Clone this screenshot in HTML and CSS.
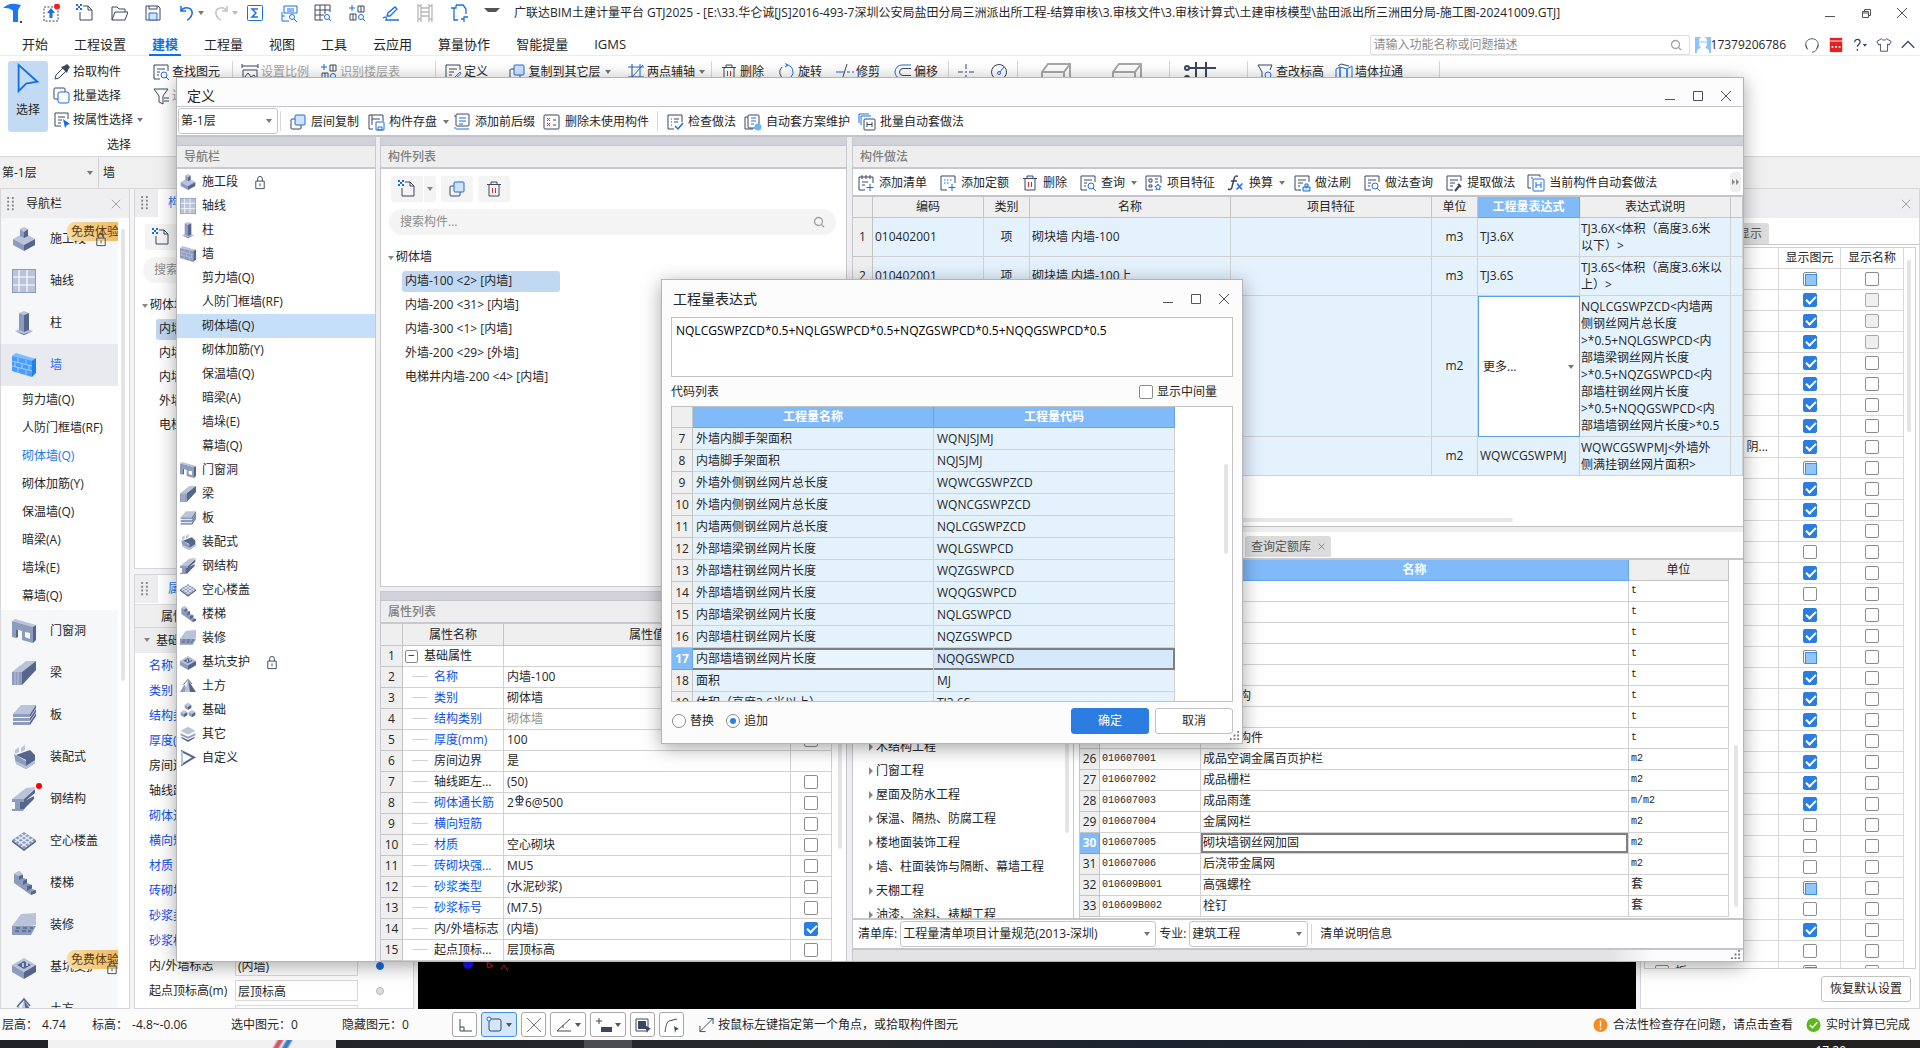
FILE: index.html
```html
<!DOCTYPE html>
<html lang="zh-CN">
<head>
<meta charset="utf-8">
<title>广联达BIM土建计量平台 GTJ2025</title>
<link rel="stylesheet" href="styles.css">
</head>
<body>
<svg class="sprite" aria-hidden="true">
  <!-- component icons -->
  <symbol id="n-stage" viewBox="0 0 24 24"><path class="l" d="M12 6l11 6-11 6L1 12z"/><path class="m" d="M1 12l11 6v6L1 18z"/><path class="d" d="M23 12v6l-11 6v-6z"/><path class="l" d="M12 0l4 2-4 3-4-3z"/><path class="m" d="M8 2l4 3v6L8 9z"/><path class="d" d="M16 2v7l-4 2V5z"/></symbol>
  <symbol id="n-axis" viewBox="0 0 24 24"><path class="m" d="M0 0h24v24H0z"/><path class="l" d="M1 1h22v22H1z"/><path d="M7 1v22M15 1v22M1 8h22M1 16h22" stroke="#fff" stroke-width="1.2" fill="none"/></symbol>
  <symbol id="n-column" viewBox="0 0 24 24"><path class="l" d="M12 16l9 4-9 4-9-4z"/><path class="d" d="M3 20l9 3 9-3-9 4z"/><path class="l" d="M7 2l5-2 5 2-5 2z"/><path class="m" d="M7 2l5 2v17l-5-2z"/><path class="d" d="M17 2v17l-5 2V4z"/></symbol>
  <symbol id="n-wall" viewBox="0 0 24 24"><path class="l" d="M0 3l4-3 20 6-4 3z"/><path class="m" d="M0 3l20 5v16L0 18z"/><path class="d" d="M20 8l4-3v15l-4 4z"/><path d="M0 8l20 5M0 13l20 5M6 5v5M14 7v4M3 9v5M10 11v5M17 12v5M6 15v5M14 17v5" stroke="#c4cde0" stroke-width=".9" fill="none"/></symbol>
  <symbol id="n-wall-on" viewBox="0 0 24 24"><path fill="#7dbcff" d="M0 3l4-3 20 6-4 3z"/><path fill="#479df8" d="M0 3l20 5v16L0 18z"/><path fill="#1e7fef" d="M20 8l4-3v15l-4 4z"/><path d="M0 8l20 5M0 13l20 5M6 5v5M14 7v4M3 9v5M10 11v5M17 12v5M6 15v5M14 17v5" stroke="#a9d3ff" stroke-width=".9" fill="none"/></symbol>
  <symbol id="n-door" viewBox="0 0 24 24"><path class="l" d="M0 2l3-2 21 6-3 2z"/><path class="m" fill-rule="evenodd" d="M0 2l21 6v16l-11-3v-9L4 10v9l-4-1zm13 11v5l5 2v-6z"/><path class="d" d="M21 8l3-2v15l-3 3zM4 10l2 1v7l-2 1z"/></symbol>
  <symbol id="n-beam" viewBox="0 0 24 24"><path class="l" d="M0 11L14 0h10L10 11z"/><path class="m" d="M0 11h10v13H0z"/><path class="d" d="M10 11L24 0v9L10 24z"/><path d="M3 11v13M6 11v13" stroke="#b9c3da"/></symbol>
  <symbol id="n-slab" viewBox="0 0 24 24"><path class="l" d="M1 11L9 2h15l-6 9z"/><path class="m" d="M1 11h17v3H1zM1 15h17v3H1zM1 19h17v3H1z"/><path class="d" d="M18 11l6-9v3l-6 9zM18 15l6-9v3l-6 9zM18 19l6-9v3l-6 9z"/></symbol>
  <symbol id="n-precast" viewBox="0 0 24 24"><path class="l" d="M3 5l4-3v5l-4 2zM9 3l4-3v5L9 7z"/><path class="m" d="M2 9l12 7v8L4 19z"/><path class="d" d="M4 10l14-5 5 5v8l-9 6v-9z"/><path class="l" d="M4 19l10 5 9-6v-3l-9 6-10-5z"/></symbol>
  <symbol id="n-steel" viewBox="0 0 24 24"><path class="l" d="M0 12L14 1l10-1-12 12z"/><path class="m" d="M0 12h12v3H8v6h5l-2 3H0v-2h3v-7H0z"/><path class="d" d="M12 12L23 2v4L12 15zM8 15h3L22 9v3L12 22H8z"/></symbol>
  <symbol id="n-hollow" viewBox="0 0 24 24"><path class="m" d="M12 3l12 8-12 9L0 11z"/><path d="M3 9.500l12 8.500M6 7l12 8.500M9 5l12 8M21 9.500L9 18M18 7L6 15.500M15 5L3 13" stroke="#e8ecf5" stroke-width="1.300" fill="none"/><path class="d" d="M0 11l12 9 12-9v2l-12 9L0 13z"/></symbol>
  <symbol id="n-stairs" viewBox="0 0 24 24"><path class="m" d="M2 3l5-3 4 4v3l4 1v4l5 2v4l4 1v3l-5 2L2 12z"/><path class="d" d="M7 5l4-1v3L7 9zM11 10l4-2v4l-4 2zM15 15l5-1v3l-5 3zM19 21l5-2v3l-5 2z"/><path class="l" d="M2 3l5-3 4 3-5 2z"/></symbol>
  <symbol id="n-finish" viewBox="0 0 24 24"><path class="l" d="M0 13L9 1l15-1v12l-5 1z"/><path class="m" d="M0 13h24l-5 9H0z"/><path d="M4 15h4M11 15h4M18 15h3M3 18h4M10 18h4M16 18h3" stroke="#55658c" stroke-width="1.500"/></symbol>
  <symbol id="n-pit" viewBox="0 0 24 24"><path class="l" d="M12 3l12 7-12 7L0 10z"/><path class="m" d="M0 10l12 7v7L0 17z"/><path class="d" d="M24 10v7l-12 7v-7z"/><path class="d" d="M12 6l7 4-7 4-7-4z"/><path class="l" d="M10 8h2v4h-2zM14 7h2v4h-2z"/></symbol>
  <symbol id="n-earth" viewBox="0 0 24 24"><path class="m" d="M0 21L7 9l3 12z"/><path class="l" d="M7 21L12 3l4 18z"/><path class="d" d="M12 3l12 18h-9z"/><path d="M5 10l7-8 6 7" stroke="#55658c" stroke-width="1.500" fill="none"/></symbol>
  <symbol id="n-found" viewBox="0 0 24 24"><path class="l" d="M12 1l5 3-5 3-5-3z"/><path class="m" d="M7 4l5 3v5L7 9z"/><path class="d" d="M17 4v5l-5 3V7z"/><path class="l" d="M6 12l5 3-5 3-5-3zM18 12l5 3-5 3-5-3z"/><path class="m" d="M1 15l5 3v5l-5-3zM13 15l5 3v5l-5-3z"/><path class="d" d="M11 15v5l-5 3v-5zM23 15v5l-5 3v-5z"/></symbol>
  <symbol id="n-other" viewBox="0 0 24 24"><path class="d" d="M2 16l10 5 10-5v2l-10 6-10-6z"/><path class="m" d="M1 11l11 5 11-5v3l-11 5-11-5z"/><path class="l" d="M12 1l11 6-11 6L1 7z"/></symbol>
  <symbol id="n-custom" viewBox="0 0 24 24"><path d="M3 2l18 9L3 22z" fill="none" stroke="#55658c" stroke-width="3"/><path d="M3 2v20" stroke="#b9c3da" stroke-width="3"/></symbol>
  <symbol id="lock" viewBox="0 0 12 16"><path d="M1.500 6.500h9v8h-9zM3.500 6.500V4a2.500 2.500 0 0 1 5 0v2.500" class="k"/><path d="M6 9v3" class="k"/></symbol>
  <!-- command icons -->
  <symbol id="c-new" viewBox="0 0 18 18"><path class="k" d="M7 2h5l4 4v10H4V8"/><path class="k" d="M12 2v4h4"/><path class="bf" d="M0 0h2v2H0zM4 0h2v2H4zM2 2h2v2H2zM0 4h2v2H0zM4 4h2v2H4z"/></symbol>
  <symbol id="c-copy" viewBox="0 0 18 18"><rect class="k" x="2" y="6" width="10" height="10" rx="1"/><rect x="6" y="2" width="10" height="10" rx="1" fill="#cfe3fb" stroke="#1a6fe0"/></symbol>
  <symbol id="c-trash" viewBox="0 0 18 18"><path class="k" d="M2 4.500h14M6 4V2h6v2M4 5v11h10V5"/><path d="M7.500 8v5M10.500 8v5" stroke="#e02a2a" fill="none"/></symbol>
  <symbol id="c-find" viewBox="0 0 18 18"><path class="k" d="M8 16H2V2h14v6M5 6h8M5 9h3M5 12h2"/><circle class="b" cx="12" cy="12" r="3"/><path class="b" d="M14 14l3 3"/></symbol>
  <symbol id="c-edit" viewBox="0 0 18 18"><path class="k" d="M8 16H2V2h14v5M5 6h8M5 9h5M5 12h3"/><path class="b" d="M10 15l6-6 1 1.500-6 5.500h-2z"/></symbol>
  <symbol id="c-check" viewBox="0 0 18 18"><path class="k" d="M8 16H2V2h14v7M5 6h1M8 6h5M5 9h1M8 9h4M5 12h1"/><path class="b" stroke-width="1.500" d="M9 13l3 3 5-6"/></symbol>
  <symbol id="c-plus" viewBox="0 0 18 18"><path class="k" d="M8 16H2V3h14v6M5 1v4M9 1v4M13 1v4M5 8h6M5 11h3"/><path class="b" d="M13 10v7M9.500 13.500h7"/></symbol>
  <symbol id="c-dots" viewBox="0 0 18 18"><path class="k" d="M8 16H2V2h14v7"/><path class="b" d="M5 6h1.500M8 6h1.500M11 6h1.500M5 9h1.500M8 9h1.500M13 10v7M9.500 13.500h7"/></symbol>
  <symbol id="c-feature" viewBox="0 0 18 18"><path class="k" d="M8 16H1V2h15v7M4 5h3v3H4zM10 5h3M10 8h3M4 11h3v2H4z"/><path class="b" d="M13 10l1 2 2 .5-1.500 1.500.5 2-2-1-2 1 .5-2L10 12.500l2-.5z"/></symbol>
  <symbol id="c-stack" viewBox="0 0 18 18"><path class="k" d="M1 4l3 0M1 4v12h8"/><rect class="k" x="4" y="2" width="11" height="13" rx="1"/><path class="b" d="M7 5h5M7 8h5M7 11h3"/><circle cx="14" cy="14" r="3.500" fill="#6fb1fa"/></symbol>
  <symbol id="c-auto" viewBox="0 0 18 18"><path class="b" d="M1 10V1h10M3 12V3h10"/><rect class="k" x="6" y="6" width="11" height="11" rx="1" fill="#fff"/><path class="k" d="M9 9v5M14 9v5M9 11.500h5"/></symbol>
  <symbol id="c-auto2" viewBox="0 0 18 18"><path class="k" d="M4 14H1V1h12v2M4 4h2"/><rect x="6" y="5" width="11" height="12" rx="1" fill="#fff" stroke="#1a6fe0"/><path class="b" d="M9 8v6M14 8v6M9 11h5"/></symbol>
  <symbol id="c-lines" viewBox="0 0 18 18"><path class="b" d="M1 3h2M1 15h2"/><rect class="k" x="3" y="1" width="13" height="12" rx="1"/><path class="b" d="M6 5h7M6 8h7M6 11h4M3 16h13"/></symbol>
  <symbol id="c-unused" viewBox="0 0 18 18"><rect class="k" x="1" y="2" width="15" height="14" rx="1"/><path d="M4 5l3 3M7 5L4 8M4 10l3 3M7 10l-3 3" stroke="#e02a2a"/><path class="k" d="M10 7h3M10 12h3"/></symbol>
  <symbol id="c-store" viewBox="0 0 18 18"><path class="k" d="M6 16H2V2h14v6M5 2v10M5 6h8"/><path class="b" d="M9 9h8v8H9zM11 14h4v3h-4z"/></symbol>
  <symbol id="c-brush" viewBox="0 0 18 18"><path class="k" d="M8 16H2V2h14v6M5 6h8M5 9h5M5 12h2"/><path d="M10 13h7v4h-7zM12 10h3v3h-3z" fill="#cfe3fb" stroke="#1a6fe0"/></symbol>
  <symbol id="c-pull" viewBox="0 0 18 18"><path class="k" d="M8 16H2V2h14v5M5 6h8M5 9h5M5 12h3"/><path d="M10 17l5-6M13 10l3 3" stroke="#3b4760" stroke-width="2"/></symbol>
  <symbol id="c-fx" viewBox="0 0 18 18"><path d="M11 2.500C9 1 7.500 2.500 7 5L5 13c-.5 2.500-2 3-4 2M4 7h6" fill="none" stroke="#3b4760" stroke-width="1.500"/><path class="b" stroke-width="1.500" d="M10 9.500l5 6M15.500 9.500l-6 6"/></symbol>
  <symbol id="c-pick" viewBox="0 0 18 18"><path d="M2 16l1-4 7-7 3 3-7 7z" class="k"/><path d="M8 4l6 6 1-3 2-3-3-3-3 2z" fill="#3b4760"/></symbol>
  <symbol id="c-batch" viewBox="0 0 18 18"><rect class="k" x="1" y="1" width="11" height="11" rx="1"/><rect x="5" y="5" width="11" height="11" rx="2" fill="#fff" stroke="#1a6fe0"/></symbol>
  <symbol id="c-attr" viewBox="0 0 18 18"><path class="k" d="M8 15H2V2h13v6M5 6h7M5 9h4M5 12h3"/><path class="bf" d="M10 8l7 5-3 1-2 3z"/></symbol>
  <symbol id="c-rot" viewBox="0 0 18 18"><path class="k" d="M4 4a7 7 0 0 0 3 12"/><path class="b" d="M8 2a7 7 0 0 1 5 12M7 .5L10 2 7 4"/><path class="k" d="M10 16h3"/></symbol>
  <symbol id="c-trim" viewBox="0 0 18 18"><path class="k" d="M11 1L6 17"/><path class="b" d="M0 9h8M11 9h3M16 9h2"/></symbol>
  <symbol id="c-off" viewBox="0 0 18 18"><path class="b" d="M17 2H8a6.500 6.500 0 0 0 0 14"/><path class="k" d="M17 5.500H9a3.500 3.500 0 0 0 0 7h8"/></symbol>
  <symbol id="c-axis" viewBox="0 0 18 18"><path class="k" d="M5 1v16M1 14h16"/><path class="b" d="M5 14L16 2M13 1v16M1 4h16"/></symbol>
  <symbol id="c-filter" viewBox="0 0 18 18"><path class="k" d="M2 2h14l-5 7v8l-4-2V9zM12 11h5M12 14h5"/></symbol>
  <symbol id="c-filterq" viewBox="0 0 18 18"><path class="k" d="M9 15H6V9L2 2h14l-2 5"/><circle class="b" cx="12" cy="12" r="3"/><path class="b" d="M14 14l3 3"/></symbol>
  <symbol id="c-wallx" viewBox="0 0 18 18"><path class="b" d="M1 6l4-2v11l-4 2zM5 4l7 2v9l-7 0zM12 6l5-3v11l-5 2z"/><path class="k" d="M3 3l3-2 8 2"/></symbol>
  <symbol id="c-scale" viewBox="0 0 18 18"><path class="k" d="M1 1v4M17 1v4M1 3h16M2 7h14v10H2zM3 15l4-5 3 4 3-2 2 3"/></symbol>
  <symbol id="c-cross" viewBox="0 0 18 18"><path class="k" d="M9 1v5M9 12v5M1 9h5M12 9h5M8 9h2"/></symbol>
  <symbol id="c-gauge" viewBox="0 0 18 18"><circle class="k" cx="9" cy="9" r="7.500"/><circle class="b" cx="9" cy="10" r="1.500"/><path class="b" d="M10 9l4-5"/></symbol>
  <symbol id="c-box" viewBox="0 0 32 32"><path d="M2 30V10L8 2h22v24M2 10h22L30 2M24 10v20" fill="none" stroke="#a8a8a8" stroke-width="2"/></symbol>
  <symbol id="c-grid" viewBox="0 0 32 32"><path d="M12 0v32M22 0v32M4 6h28M4 16h28" fill="none" stroke="#3b4760" stroke-width="2"/><circle cx="3" cy="6" r="2" fill="none" stroke="#3b4760" stroke-width="2"/><circle cx="3" cy="16" r="2" fill="none" stroke="#3b4760" stroke-width="2"/></symbol>
  <symbol id="c-cursor" viewBox="0 0 24 32"><path d="M2 2l20 18-12 2-8 8z" fill="none" stroke="#1a6fe0" stroke-width="2"/></symbol>
  <!-- quick access icons -->
  <symbol id="q-logo" viewBox="0 0 22 20"><path fill="#1a78f0" d="M0 5C4 1 9 0 13 1l5 1-3 5v12h-5V8L9 7C6 5 3 5 0 5z"/><path fill="#444" d="M17 18h2v2h-2z"/></symbol>
  <symbol id="q-up" viewBox="0 0 18 18"><path class="k" stroke-dasharray="2 1.500" d="M2 3h14v14H2z"/><path class="bf" d="M9 4l4 5h-2.500v5h-3V9H5z"/><circle cx="15" cy="2.500" r="3" fill="#f02020"/></symbol>
  <symbol id="q-open" viewBox="0 0 18 18"><path class="k" d="M2 16V3h5l2 2h6v3M2 16l3-8h13l-3 8z"/></symbol>
  <symbol id="q-save" viewBox="0 0 18 18"><path class="k" d="M2 2h12l2 2v12H2zM5 2v3h8V2"/><path fill="#cfe3fb" stroke="#1a6fe0" d="M5 9h8v7H5z"/></symbol>
  <symbol id="q-undo" viewBox="0 0 18 18"><path class="b" stroke-width="1.500" d="M3 2v5h5M3 7c3-5 12-4 11 3-1 4-4 6-5 6"/></symbol>
  <symbol id="q-redo" viewBox="0 0 18 18"><path fill="none" stroke="#c4c4c4" stroke-width="1.500" d="M15 2v5h-5M15 7C12 2 3 3 4 10c1 4 4 6 5 6"/></symbol>
  <symbol id="q-sum" viewBox="0 0 18 18"><rect class="b" x="1.500" y="1.500" width="15" height="15" rx="1"/><path class="b" stroke-width="1.500" d="M12 5H6l4 4-4 4h6"/></symbol>
  <symbol id="q-calc" viewBox="0 0 18 18"><path class="b" d="M4 2h13v7H4zM7 5h7M7 7h7M2 8v9h7M2 12h3"/><circle class="b" cx="12" cy="13" r="2.500"/><path class="b" d="M14 15l3 3"/></symbol>
  <symbol id="q-table" viewBox="0 0 18 18"><path class="k" d="M1 1h15v7M1 1v15h8M1 6h15M1 11h9M6 1v15M11 1v9"/><circle class="b" cx="13" cy="13" r="2.500"/><path class="b" d="M15 15l2 2"/></symbol>
  <symbol id="q-quad" viewBox="0 0 18 18"><path class="b" d="M1 4h6M4 1v6"/><path class="k" d="M10 2h6v6h-6zM2 10h6v6H2zM5 10v6M13 2v6"/><circle class="b" cx="13" cy="13" r="2.500"/><path class="b" d="M15 15l2 2"/></symbol>
  <symbol id="q-pen" viewBox="0 0 18 18"><path class="b" stroke-width="1.300" d="M5 12l1-3 7-6 2 2-7 7zM1 14c3-2 4 0 3 2h13"/></symbol>
  <symbol id="q-film" viewBox="0 0 18 18"><path fill="none" stroke="#b8b8b8" stroke-width="1.300" d="M2 0v18M5 0v18M13 0v18M16 0v18M5 4h8M5 8h8M5 12h8M2 2h3M2 15h3M13 2h3M13 15h3"/></symbol>
  <symbol id="q-frame" viewBox="0 0 18 18"><path class="b" stroke-width="1.300" d="M1 4h5V1M6 1h7l3 4v5M4 4v12h4M11 15h3v3M18 13h-4v3"/></symbol>
  <symbol id="w-min" viewBox="0 0 12 12"><path class="w" d="M1 9.500h10"/></symbol>
  <symbol id="w-max" viewBox="0 0 12 12"><path class="w" d="M1.500 1.500h9v9h-9z"/></symbol>
  <symbol id="w-rest" viewBox="0 0 12 12"><path class="w" d="M2.500 4.500h6v6h-6zM4.500 4V2.500h6v6H9M3 6h5"/></symbol>
  <symbol id="w-x" viewBox="0 0 12 12"><path class="w" d="M1 1l10 10M11 1L1 11"/></symbol>
  <symbol id="mag" viewBox="0 0 12 12"><circle cx="5.500" cy="5.500" r="4" fill="none" stroke="#a0a0a0" stroke-width="1.300"/><path d="M8 8l3 3" stroke="#a0a0a0" stroke-width="1.300"/></symbol>
  <symbol id="s-grip" viewBox="0 0 10 10"><path fill="#777" d="M8 0h2v2H8zM4 4h2v2H4zM8 4h2v2H8zM0 8h2v2H0zM4 8h2v2H4zM8 8h2v2H8z"/></symbol>
  <symbol id="dots" viewBox="0 0 7 16"><path fill="#888" d="M0 0h2v2H0zM5 0h2v2H5zM0 4h2v2H0zM5 4h2v2H5zM0 8h2v2H0zM5 8h2v2H5zM0 12h2v2H0zM5 12h2v2H5z"/></symbol>
</svg>

<header class="titlebar">
  <svg class="logo"><use href="#q-logo"/></svg>
  <div class="quick">
    <button aria-label="升级"><svg><use href="#q-up"/></svg></button>
    <button aria-label="新建"><svg><use href="#c-new"/></svg></button>
    <button aria-label="打开"><svg><use href="#q-open"/></svg></button>
    <button aria-label="保存"><svg><use href="#q-save"/></svg></button>
    <button aria-label="撤销" class="drop"><svg><use href="#q-undo"/></svg></button>
    <button aria-label="恢复" class="drop off"><svg><use href="#q-redo"/></svg></button>
    <button aria-label="汇总计算"><svg><use href="#q-sum"/></svg></button>
    <button aria-label="查看计算式"><svg><use href="#q-calc"/></svg></button>
    <button aria-label="查看报表"><svg><use href="#q-table"/></svg></button>
    <button aria-label="查看工程量"><svg><use href="#q-quad"/></svg></button>
    <button aria-label="标注"><svg><use href="#q-pen"/></svg></button>
    <button aria-label="录屏"><svg><use href="#q-film"/></svg></button>
    <button aria-label="框选"><svg><use href="#q-frame"/></svg></button>
    <button aria-label="更多" class="more"></button>
  </div>
  <h1>广联达BIM土建计量平台 GTJ2025 - [E:\33.华仑诚[JS]2016-493-7深圳公安局盐田分局三洲派出所工程-结算审核\3.审核文件\3.审核计算式\土建审核模型\盐田派出所三洲田分局-施工图-20241009.GTJ]</h1>
  <div class="winbtns wide">
    <button aria-label="最小化"><svg><use href="#w-min"/></svg></button>
    <button aria-label="还原"><svg><use href="#w-rest"/></svg></button>
    <button aria-label="关闭"><svg><use href="#w-x"/></svg></button>
  </div>
</header>

<nav class="menu">
  <a href="#">开始</a><a href="#">工程设置</a><a href="#" class="on">建模</a><a href="#">工程量</a><a href="#">视图</a><a href="#">工具</a><a href="#">云应用</a><a href="#">算量协作</a><a href="#">智能提量</a><a href="#">IGMS</a>
  <div class="menu-right">
    <label class="search"><input type="text" placeholder="请输入功能名称或问题描述" aria-label="搜索功能"><svg><use href="#mag"/></svg></label>
    <svg class="avatar" viewBox="0 0 16 16"><path fill="#8ec3f8" d="M0 0h16v16H0z"/><path fill="#fff" d="M4 4a4 4 0 0 1 8 0v3c0 2-1 3-2 3.500l4 2.500v3H2v-3l4-2.500C5 10 4 9 4 7z"/><path stroke="#8ec3f8" d="M4 5h8"/></svg>
    <span class="phone">17379206786</span>
    <svg class="mi" viewBox="0 0 18 18"><path class="k" d="M3 13C0 6 4 2 9 2s9 4 6 11M2 9l2 5M16 9l-2 5c-1 2-2 3-5 3"/></svg>
    <svg class="mi" viewBox="0 0 18 18"><path fill="#e52222" d="M2 1h14v16H2z"/><path stroke="#fff" d="M2 4.500h14"/><path fill="#fff" d="M4 10h2v2H4zM8 10h2v2H8zM12 10h2v2h-2z"/></svg>
    <svg class="mi" viewBox="0 0 18 18"><path class="k" stroke-width="1.500" d="M3 6c0-5 7-4 6 0 0 2-3 3-3 5M6 13.500v2"/><path fill="#3b4760" d="M12 8h5l-2.500 3z"/></svg>
    <svg class="mi" viewBox="0 0 18 18"><path class="k" d="M6 2L1 5l2 4 2-1v8h8V8l2 1 2-4-5-3c-1 2-5 2-6 0z"/></svg>
    <svg class="mi" viewBox="0 0 18 18"><path class="k" stroke-width="1.500" d="M2 12l7-7 7 7"/></svg>
  </div>
</nav>

<section class="ribbon">
  <div class="rb-select">
    <button class="big"><svg><use href="#c-cursor"/></svg>选择</button>
    <div class="rb-col">
      <button class="tool"><svg><use href="#c-pick"/></svg>拾取构件</button>
      <button class="tool"><svg><use href="#c-batch"/></svg>批量选择</button>
      <button class="tool caret"><svg><use href="#c-attr"/></svg>按属性选择</button>
    </div>
    <span class="rb-name">选择</span>
  </div>
  <div class="rb g-find rb-col">
    <button class="tool"><svg><use href="#c-find"/></svg>查找图元</button>
    <button class="tool off"><svg><use href="#c-filter"/></svg>过滤图元</button>
  </div>
  <div class="rb g-scale"><button class="tool off"><svg><use href="#c-scale"/></svg>设置比例</button><button class="tool off"><svg><use href="#q-quad"/></svg>识别楼层表</button></div>
  <div class="rb g-def"><button class="tool"><svg><use href="#c-edit"/></svg>定义</button><button class="tool caret"><svg><use href="#c-copy"/></svg>复制到其它层</button><button class="tool caret"><svg><use href="#c-axis"/></svg>两点辅轴</button></div>
  <div class="rb g-mod"><button class="tool"><svg><use href="#c-trash"/></svg>删除</button><button class="tool"><svg><use href="#c-rot"/></svg>旋转</button><button class="tool"><svg><use href="#c-trim"/></svg>修剪</button><button class="tool"><svg><use href="#c-off"/></svg>偏移</button></div>
  <div class="rb g-pt"><button class="tool off" aria-label="打断"><svg><use href="#c-cross"/></svg></button><button class="tool" aria-label="测量"><svg><use href="#c-gauge"/></svg></button></div>
  <div class="rb g-box"><svg class="ic32"><use href="#c-box"/></svg><svg class="ic32"><use href="#c-box"/></svg></div>
  <div class="rb g-grid"><svg class="ic32"><use href="#c-grid"/></svg></div>
  <div class="rb g-last"><button class="tool"><svg><use href="#c-filterq"/></svg>查改标高</button><button class="tool"><svg><use href="#c-wallx"/></svg>墙体拉通</button></div>
</section>

<div class="floorbar">
  <span class="combo floor"><select aria-label="楼层"><option>第-1层</option></select></span>
  <span class="floor-type">墙</span>
</div>

<main class="work">
  <aside class="panel navpanel">
    <div class="phead"><svg class="dots"><use href="#dots"/></svg>导航栏<button class="px" aria-label="关闭"><svg><use href="#w-x"/></svg></button></div>
    <div class="navscroll">
      <ul class="bignav">
        <li><svg><use href="#n-stage"/></svg>施工段<span class="badge">免费体验</span><svg class="lock"><use href="#lock"/></svg></li>
        <li><svg><use href="#n-axis"/></svg>轴线</li>
        <li><svg><use href="#n-column"/></svg>柱</li>
        <li class="on"><svg><use href="#n-wall-on"/></svg>墙</li>
        <li class="sub">剪力墙(Q)</li><li class="sub">人防门框墙(RF)</li><li class="sub on">砌体墙(Q)</li><li class="sub">砌体加筋(Y)</li><li class="sub">保温墙(Q)</li><li class="sub">暗梁(A)</li><li class="sub">墙垛(E)</li><li class="sub">幕墙(Q)</li>
        <li><svg><use href="#n-door"/></svg>门窗洞</li>
        <li><svg><use href="#n-beam"/></svg>梁</li>
        <li><svg><use href="#n-slab"/></svg>板</li>
        <li><svg><use href="#n-precast"/></svg>装配式</li>
        <li class="hot"><svg><use href="#n-steel"/></svg>钢结构</li>
        <li><svg><use href="#n-hollow"/></svg>空心楼盖</li>
        <li><svg><use href="#n-stairs"/></svg>楼梯</li>
        <li><svg><use href="#n-finish"/></svg>装修</li>
        <li><svg><use href="#n-pit"/></svg>基坑支护<span class="badge">免费体验</span><svg class="lock far"><use href="#lock"/></svg></li>
        <li><svg><use href="#n-earth"/></svg>土方</li>
      </ul>
      <i class="vbar v-nav"></i>
    </div>
  </aside>

  <div class="sidecol">
    <section class="panel sidelist">
      <div class="phead tabbed"><svg class="dots"><use href="#dots"/></svg><span class="tab">构件列表</span></div>
      <div class="iconbtns"><button aria-label="新建"><svg><use href="#c-new"/></svg></button></div>
      <label class="pill"><input type="text" placeholder="搜索构件..." aria-label="搜索构件"></label>
      <ul class="tree"><li class="root">砌体墙</li><li class="sel">内墙-100</li><li>内墙-200</li><li>内墙-300</li><li>外墙-200</li><li>电梯井内墙</li></ul>
    </section>
    <section class="panel sideprops">
      <div class="phead tabbed"><svg class="dots"><use href="#dots"/></svg><span class="tab">属性列表</span></div>
      <div class="sp-head">属性名称</div>
      <div class="sp-group">基础属性</div>
      <div class="sp-rows">
        <label class="blue">名称<input value="内墙-100"></label>
        <label class="blue">类别<input value="砌体墙"></label>
        <label class="blue">结构类别<input value="砌体墙"></label>
        <label class="blue">厚度(mm)<input value="100"></label>
        <label>房间边界<input value="是"></label>
        <label>轴线距左<input value="(50)"></label>
        <label class="blue">砌体通长筋<input value="2C6@500"></label>
        <label class="blue">横向短筋<input value=""></label>
        <label class="blue">材质<input value="空心砌块"></label>
        <label class="blue">砖砌块强<input value="MU5"></label>
        <label class="blue">砂浆类型<input value="(水泥砂浆)"></label>
        <label class="blue">砂浆标号<input value="(M7.5)"></label>
        <label>内/外墙标志<input value="(内墙)"><i class="dot blue-dot"></i></label>
        <label>起点顶标高(m)<input value="层顶标高"><i class="dot"></i></label>
        <label>&nbsp;<input value=""></label>
      </div>
    </section>
  </div>

  <div class="canvas"><svg viewBox="0 0 80 14"><circle cx="8" cy="4" r="5" fill="#1414e6"/><path d="M27 2l6 4-5 2zM41 9l3-4 4 6" stroke="#e01818" fill="none"/></svg></div>

  <aside class="panel viewpanel">
    <div class="phead"><button class="px" aria-label="关闭"><svg><use href="#w-x"/></svg></button></div>
    <div class="vtabs"><button>图元显示</button><button>楼层显示</button></div>
    <div class="vwrap">
      <table class="vtable">
        <colgroup><col><col class="c62"><col class="c63"></colgroup>
        <thead><tr><th></th><th>显示图元</th><th>显示名称</th></tr></thead>
        <tbody>
          <tr><td></td><td><input type="checkbox" class="mixed" aria-label="图元"></td><td><input type="checkbox" aria-label="名称"></td></tr>
          <tr><td></td><td><input type="checkbox" checked aria-label="图元"></td><td><input type="checkbox" disabled aria-label="名称"></td></tr>
          <tr><td></td><td><input type="checkbox" checked aria-label="图元"></td><td><input type="checkbox" disabled aria-label="名称"></td></tr>
          <tr><td></td><td><input type="checkbox" checked aria-label="图元"></td><td><input type="checkbox" disabled aria-label="名称"></td></tr>
          <tr><td></td><td><input type="checkbox" checked aria-label="图元"></td><td><input type="checkbox" aria-label="名称"></td></tr>
          <tr><td></td><td><input type="checkbox" checked aria-label="图元"></td><td><input type="checkbox" aria-label="名称"></td></tr>
          <tr><td></td><td><input type="checkbox" checked aria-label="图元"></td><td><input type="checkbox" aria-label="名称"></td></tr>
          <tr><td></td><td><input type="checkbox" checked aria-label="图元"></td><td><input type="checkbox" aria-label="名称"></td></tr>
          <tr><td class="end">阴...</td><td><input type="checkbox" checked aria-label="图元"></td><td><input type="checkbox" aria-label="名称"></td></tr>
          <tr><td></td><td><input type="checkbox" class="mixed" aria-label="图元"></td><td><input type="checkbox" aria-label="名称"></td></tr>
          <tr><td></td><td><input type="checkbox" checked aria-label="图元"></td><td><input type="checkbox" aria-label="名称"></td></tr>
          <tr><td></td><td><input type="checkbox" checked aria-label="图元"></td><td><input type="checkbox" aria-label="名称"></td></tr>
          <tr><td></td><td><input type="checkbox" checked aria-label="图元"></td><td><input type="checkbox" aria-label="名称"></td></tr>
          <tr><td></td><td><input type="checkbox" aria-label="图元"></td><td><input type="checkbox" aria-label="名称"></td></tr>
          <tr><td></td><td><input type="checkbox" checked aria-label="图元"></td><td><input type="checkbox" aria-label="名称"></td></tr>
          <tr><td></td><td><input type="checkbox" aria-label="图元"></td><td><input type="checkbox" aria-label="名称"></td></tr>
          <tr><td></td><td><input type="checkbox" checked aria-label="图元"></td><td><input type="checkbox" aria-label="名称"></td></tr>
          <tr><td></td><td><input type="checkbox" checked aria-label="图元"></td><td><input type="checkbox" aria-label="名称"></td></tr>
          <tr><td></td><td><input type="checkbox" class="mixed" aria-label="图元"></td><td><input type="checkbox" aria-label="名称"></td></tr>
          <tr><td></td><td><input type="checkbox" checked aria-label="图元"></td><td><input type="checkbox" aria-label="名称"></td></tr>
          <tr><td></td><td><input type="checkbox" checked aria-label="图元"></td><td><input type="checkbox" aria-label="名称"></td></tr>
          <tr><td></td><td><input type="checkbox" checked aria-label="图元"></td><td><input type="checkbox" aria-label="名称"></td></tr>
          <tr><td></td><td><input type="checkbox" checked aria-label="图元"></td><td><input type="checkbox" aria-label="名称"></td></tr>
          <tr><td></td><td><input type="checkbox" checked aria-label="图元"></td><td><input type="checkbox" aria-label="名称"></td></tr>
          <tr><td></td><td><input type="checkbox" checked aria-label="图元"></td><td><input type="checkbox" aria-label="名称"></td></tr>
          <tr><td></td><td><input type="checkbox" checked aria-label="图元"></td><td><input type="checkbox" aria-label="名称"></td></tr>
          <tr><td></td><td><input type="checkbox" aria-label="图元"></td><td><input type="checkbox" aria-label="名称"></td></tr>
          <tr><td></td><td><input type="checkbox" aria-label="图元"></td><td><input type="checkbox" aria-label="名称"></td></tr>
          <tr><td></td><td><input type="checkbox" aria-label="图元"></td><td><input type="checkbox" aria-label="名称"></td></tr>
          <tr><td></td><td><input type="checkbox" class="mixed" aria-label="图元"></td><td><input type="checkbox" aria-label="名称"></td></tr>
          <tr><td></td><td><input type="checkbox" aria-label="图元"></td><td><input type="checkbox" aria-label="名称"></td></tr>
          <tr><td></td><td><input type="checkbox" checked aria-label="图元"></td><td><input type="checkbox" aria-label="名称"></td></tr>
          <tr><td></td><td><input type="checkbox" aria-label="图元"></td><td><input type="checkbox" aria-label="名称"></td></tr>
          <tr><td class="start"><label><input type="checkbox">板</label></td><td><input type="checkbox" class="mixed" aria-label="图元"></td><td><input type="checkbox" aria-label="名称"></td></tr>
        </tbody>
      </table>
      <i class="vbar v-view"></i>
    </div>
    <div class="vfoot"><button class="btn">恢复默认设置</button></div>
  </aside>
</main>

<footer class="status">
  <span class="st s1">层高：<b>4.74</b></span><span class="st s2">标高：<b>-4.8~-0.06</b></span><span class="st s3">选中图元：0</span><span class="st s4">隐藏图元：0</span>
  <div class="sbtns">
    <button aria-label="正交"><svg viewBox="0 0 18 18"><path class="k" d="M4 3v12h12M4 11h4v4"/></svg></button>
    <button class="wide on" aria-label="捕捉"><svg viewBox="0 0 18 18"><rect class="k" x="3" y="3" width="12" height="12" rx="2"/><circle cx="3" cy="3" r="2" fill="#fff" stroke="#1a6fe0"/></svg></button>
    <button aria-label="交点"><svg viewBox="0 0 18 18"><path d="M2 2l14 14M16 2L2 16" stroke="#777"/></svg></button>
    <button class="wide" aria-label="角度"><svg viewBox="0 0 18 18"><path class="k" d="M15 3L2 15h14M8 9v3"/></svg></button>
    <button class="wide" aria-label="动态输入"><svg viewBox="0 0 18 18"><path class="k" d="M4 2v6M1 5h6"/><path fill="#3b4760" d="M6 11h11v5H6z"/></svg></button>
    <button aria-label="框选"><svg viewBox="0 0 18 18"><path class="k" d="M2 3h12v12H2z"/><path fill="#3b4760" d="M4 5h8v8H4zM11 9l6 4-3 1-1 3z"/></svg></button>
    <button aria-label="折线"><svg viewBox="0 0 18 18"><path class="k" d="M2 16c1-7 2-10 4-11l8-2"/><path fill="#3b4760" d="M11 10l5 3-3 1-1 3z"/></svg></button>
  </div>
  <span class="hint"><svg viewBox="0 0 16 16"><path class="k" d="M1 15L15 1M9 1h6v6M1 9v6h6"/></svg>按鼠标左键指定第一个角点，或拾取构件图元</span>
  <span class="right"><span class="hint"><svg viewBox="0 0 16 16"><circle cx="8" cy="8" r="7.500" fill="#f78b24"/><path d="M8 3.500v6M8 11v2" stroke="#fff" stroke-width="1.500"/></svg>合法性检查存在问题，请点击查看</span><span class="hint"><svg viewBox="0 0 16 16"><circle cx="8" cy="8" r="7.500" fill="#5cb81c"/><path d="M4 8l3 3 5-6" fill="none" stroke="#fff" stroke-width="1.500"/></svg>实时计算已完成</span></span>
</footer>
<div class="taskbar"><i class="task-app"></i><i class="task-on"></i><span class="clock">17:20</span></div>

<!-- definition window -->
<section class="win defwin" aria-label="定义">
  <div class="wintitle">定义<div class="winbtns"><button aria-label="最小化"><svg><use href="#w-min"/></svg></button><button aria-label="最大化"><svg><use href="#w-max"/></svg></button><button aria-label="关闭"><svg><use href="#w-x"/></svg></button></div></div>
  <div class="toolbar dtools">
    <span class="combo boxed fl"><select aria-label="楼层"><option>第-1层</option></select></span><i class="sep"></i>
    <button class="tool"><svg><use href="#c-copy"/></svg>层间复制</button>
    <button class="tool caret"><svg><use href="#c-store"/></svg>构件存盘</button>
    <button class="tool"><svg><use href="#c-lines"/></svg>添加前后缀</button>
    <button class="tool"><svg><use href="#c-unused"/></svg>删除未使用构件</button><i class="sep"></i>
    <button class="tool"><svg><use href="#c-check"/></svg>检查做法</button>
    <button class="tool"><svg><use href="#c-stack"/></svg>自动套方案维护</button>
    <button class="tool"><svg><use href="#c-auto"/></svg>批量自动套做法</button>
  </div>
  <div class="defbody">
    <div class="dnav">
      <div class="strip"></div><h2>导航栏</h2>
      <ul class="smallnav">
        <li><svg><use href="#n-stage"/></svg>施工段<svg class="lock"><use href="#lock"/></svg></li>
        <li><svg><use href="#n-axis"/></svg>轴线</li><li><svg><use href="#n-column"/></svg>柱</li><li><svg><use href="#n-wall"/></svg>墙</li>
        <li class="sub">剪力墙(Q)</li><li class="sub">人防门框墙(RF)</li><li class="sub sel">砌体墙(Q)</li><li class="sub">砌体加筋(Y)</li><li class="sub">保温墙(Q)</li><li class="sub">暗梁(A)</li><li class="sub">墙垛(E)</li><li class="sub">幕墙(Q)</li>
        <li><svg><use href="#n-door"/></svg>门窗洞</li><li><svg><use href="#n-beam"/></svg>梁</li><li><svg><use href="#n-slab"/></svg>板</li><li><svg><use href="#n-precast"/></svg>装配式</li><li><svg><use href="#n-steel"/></svg>钢结构</li><li><svg><use href="#n-hollow"/></svg>空心楼盖</li><li><svg><use href="#n-stairs"/></svg>楼梯</li><li><svg><use href="#n-finish"/></svg>装修</li>
        <li><svg><use href="#n-pit"/></svg>基坑支护<svg class="lock"><use href="#lock"/></svg></li>
        <li><svg><use href="#n-earth"/></svg>土方</li><li><svg><use href="#n-found"/></svg>基础</li><li><svg><use href="#n-other"/></svg>其它</li><li><svg><use href="#n-custom"/></svg>自定义</li>
      </ul>
    </div>
    <div class="dmid">
      <div class="dlist">
        <div class="strip"></div><h2>构件列表</h2>
        <div class="iconbtns"><button class="split" aria-label="新建"><svg><use href="#c-new"/></svg></button><button aria-label="复制"><svg><use href="#c-copy"/></svg></button><button aria-label="删除"><svg><use href="#c-trash"/></svg></button></div>
        <label class="pill"><input type="text" placeholder="搜索构件..." aria-label="搜索构件"><svg><use href="#mag"/></svg></label>
        <ul class="tree"><li class="root">砌体墙</li><li class="sel">内墙-100 &lt;2&gt; [内墙]</li><li>内墙-200 &lt;31&gt; [内墙]</li><li>内墙-300 &lt;1&gt; [内墙]</li><li>外墙-200 &lt;29&gt; [外墙]</li><li>电梯井内墙-200 &lt;4&gt; [内墙]</li></ul>
      </div>
      <div class="dprops">
        <div class="strip"></div><h2>属性列表</h2>
        <div class="tscroll">
        <table class="grid ptable">
          <colgroup><col class="c22"><col class="c101"><col><col class="c41"></colgroup>
          <thead><tr><th></th><th>属性名称</th><th>属性值</th><th>附加</th></tr></thead>
          <tbody>
            <tr><th>1</th><td class="grp"><span class="minus">−</span>基础属性</td><td></td><td></td></tr>
            <tr><th>2</th><td class="nm blue">名称</td><td>内墙-100</td><td></td></tr>
            <tr><th>3</th><td class="nm blue">类别</td><td>砌体墙</td><td><input type="checkbox" aria-label="附加"></td></tr>
            <tr><th>4</th><td class="nm blue">结构类别</td><td class="mute">砌体墙</td><td><input type="checkbox" aria-label="附加"></td></tr>
            <tr><th>5</th><td class="nm blue">厚度(mm)</td><td>100</td><td><input type="checkbox" aria-label="附加"></td></tr>
            <tr><th>6</th><td class="nm">房间边界</td><td>是</td><td></td></tr>
            <tr><th>7</th><td class="nm">轴线距左...</td><td>(50)</td><td><input type="checkbox" aria-label="附加"></td></tr>
            <tr><th>8</th><td class="nm blue">砌体通长筋</td><td>2<svg class="rebar" viewBox="0 0 10 10"><circle cx="5" cy="4" r="3" class="k"/><path class="k" d="M5 0v9M1 4h8M2 9h6"/></svg>6@500</td><td><input type="checkbox" aria-label="附加"></td></tr>
            <tr><th>9</th><td class="nm blue">横向短筋</td><td></td><td><input type="checkbox" aria-label="附加"></td></tr>
            <tr><th>10</th><td class="nm blue">材质</td><td>空心砌块</td><td><input type="checkbox" aria-label="附加"></td></tr>
            <tr><th>11</th><td class="nm blue">砖砌块强...</td><td>MU5</td><td><input type="checkbox" aria-label="附加"></td></tr>
            <tr><th>12</th><td class="nm blue">砂浆类型</td><td>(水泥砂浆)</td><td><input type="checkbox" aria-label="附加"></td></tr>
            <tr><th>13</th><td class="nm blue">砂浆标号</td><td>(M7.5)</td><td><input type="checkbox" aria-label="附加"></td></tr>
            <tr><th>14</th><td class="nm">内/外墙标志</td><td>(内墙)</td><td><input type="checkbox" checked aria-label="附加"></td></tr>
            <tr><th>15</th><td class="nm">起点顶标...</td><td>层顶标高</td><td><input type="checkbox" aria-label="附加"></td></tr>
          </tbody>
        </table>
        <i class="vbar v-prop"></i>
        </div>
      </div>
    </div>
    <div class="dright">
      <div class="strip"></div><h2>构件做法</h2>
      <div class="toolbar rtools">
        <button class="tool"><svg><use href="#c-plus"/></svg>添加清单</button>
        <button class="tool"><svg><use href="#c-dots"/></svg>添加定额</button>
        <button class="tool"><svg><use href="#c-trash"/></svg>删除</button>
        <button class="tool caret"><svg><use href="#c-find"/></svg>查询</button>
        <button class="tool"><svg><use href="#c-feature"/></svg>项目特征</button>
        <button class="tool caret"><svg><use href="#c-fx"/></svg>换算</button>
        <button class="tool"><svg><use href="#c-brush"/></svg>做法刷</button>
        <button class="tool"><svg><use href="#c-find"/></svg>做法查询</button>
        <button class="tool"><svg><use href="#c-pull"/></svg>提取做法</button>
        <button class="tool"><svg><use href="#c-auto2"/></svg>当前构件自动套做法</button>
        <button class="over" aria-label="更多"><svg viewBox="0 0 8 6"><path fill="#888" d="M0 0l3 3-3 3zM4 0l3 3-3 3z"/></svg></button>
      </div>
      <div class="upper">
        <table class="grid mtable">
          <colgroup><col class="c20"><col class="c111"><col class="c46"><col class="c201"><col class="c201"><col class="c46"><col class="c102"><col class="c150"><col></colgroup>
          <thead><tr><th></th><th>编码</th><th>类别</th><th>名称</th><th>项目特征</th><th>单位</th><th class="hl">工程量表达式</th><th>表达式说明</th><th></th></tr></thead>
          <tbody>
            <tr><th>1</th><td>010402001</td><td class="c">项</td><td>砌块墙 内墙-100</td><td></td><td class="c">m3</td><td>TJ3.6X</td><td class="lines">TJ3.6X&lt;体积（高度3.6米<br>以下）&gt;</td><td></td></tr>
            <tr><th>2</th><td>010402001</td><td class="c">项</td><td>砌块墙 内墙-100上</td><td></td><td class="c">m3</td><td>TJ3.6S</td><td class="lines">TJ3.6S&lt;体积（高度3.6米以<br>上）&gt;</td><td></td></tr>
            <tr class="tall"><th>3</th><td>010607005</td><td class="c">项</td><td>砌块墙钢丝网加固</td><td></td><td class="c">m2</td><td class="editing"><span class="combo cell"><select aria-label="工程量表达式"><option>更多...</option></select></span></td><td class="lines">NQLCGSWPZCD&lt;内墙两<br>侧钢丝网片总长度<br>&gt;*0.5+NQLGSWPCD&lt;内<br>部墙梁钢丝网片长度<br>&gt;*0.5+NQZGSWPCD&lt;内<br>部墙柱钢丝网片长度<br>&gt;*0.5+NQQGSWPCD&lt;内<br>部墙墙钢丝网片长度&gt;*0.5</td><td></td></tr>
            <tr><th>4</th><td>010607005</td><td class="c">项</td><td>砌块墙钢丝网加固</td><td></td><td class="c">m2</td><td>WQWCGSWPMJ</td><td class="lines">WQWCGSWPMJ&lt;外墙外<br>侧满挂钢丝网片面积&gt;</td><td></td></tr>
          </tbody>
        </table>
        <i class="hbar"></i>
      </div>
      <div class="lower">
        <div class="ltabs"><button>查询定额库<svg><use href="#w-x"/></svg></button></div>
        <div class="lbody">
          <div class="ltree">
            <ul><li>建筑工程</li><li>土石方工程</li><li>地基处理与边坡支护工程</li><li>桩基工程</li><li>砌筑工程</li><li>混凝土及钢筋混凝土工程</li><li>金属结构工程</li><li>木结构工程</li><li>门窗工程</li><li>屋面及防水工程</li><li>保温、隔热、防腐工程</li><li>楼地面装饰工程</li><li>墙、柱面装饰与隔断、幕墙工程</li><li>天棚工程</li><li>油漆、涂料、裱糊工程</li></ul>
            <i class="vbar v-tree"></i>
          </div>
          <div class="lgrid">
            <table class="grid qtable">
              <colgroup><col class="c20"><col class="c101"><col><col class="c100"></colgroup>
              <thead><tr><th></th><th>编码</th><th class="hl">名称</th><th>单位</th></tr></thead>
              <tbody>
                <tr><th>18</th><td></td><td></td><td>t</td></tr>
                <tr><th>19</th><td></td><td></td><td>t</td></tr>
                <tr><th>20</th><td></td><td></td><td>t</td></tr>
                <tr><th>21</th><td></td><td></td><td>t</td></tr>
                <tr><th>22</th><td></td><td></td><td>t</td></tr>
                <tr><th>23</th><td></td><td>轻型钢构</td><td>t</td></tr>
                <tr><th>24</th><td></td><td></td><td>t</td></tr>
                <tr><th>25</th><td></td><td>零星钢构件</td><td>t</td></tr>
                <tr><th>26</th><td>010607001</td><td>成品空调金属百页护栏</td><td>m2</td></tr>
                <tr><th>27</th><td>010607002</td><td>成品栅栏</td><td>m2</td></tr>
                <tr><th>28</th><td>010607003</td><td>成品雨蓬</td><td>m/m2</td></tr>
                <tr><th>29</th><td>010607004</td><td>金属网栏</td><td>m2</td></tr>
                <tr class="cur"><th>30</th><td>010607005</td><td class="focus">砌块墙钢丝网加固</td><td>m2</td></tr>
                <tr><th>31</th><td>010607006</td><td>后浇带金属网</td><td>m2</td></tr>
                <tr><th>32</th><td>010609B001</td><td>高强螺栓</td><td class="han">套</td></tr>
                <tr><th>33</th><td>010609B002</td><td>栓钉</td><td class="han">套</td></tr>
              </tbody>
            </table>
            <i class="vbar v-q"></i>
          </div>
        </div>
        <div class="lbar">
          <label for="lib">清单库:</label><span class="combo boxed lib"><select id="lib"><option>工程量清单项目计量规范(2013-深圳)</option></select></span>
          <label for="spec">专业:</label><span class="combo boxed spec"><select id="spec"><option>建筑工程</option></select></span><i class="sep"></i><a href="#">清单说明信息</a>
        </div>
        <div class="lfoot"><svg class="grip"><use href="#s-grip"/></svg></div>
      </div>
    </div>
  </div>
</section>

<!-- expression window -->
<section class="win expwin" aria-label="工程量表达式">
  <div class="exptitle">工程量表达式<div class="winbtns"><button aria-label="最小化"><svg><use href="#w-min"/></svg></button><button aria-label="最大化"><svg><use href="#w-max"/></svg></button><button aria-label="关闭"><svg><use href="#w-x"/></svg></button></div></div>
  <textarea aria-label="表达式">NQLCGSWPZCD*0.5+NQLGSWPCD*0.5+NQZGSWPCD*0.5+NQQGSWPCD*0.5</textarea>
  <div class="explabel"><span>代码列表</span><label><input type="checkbox">显示中间量</label></div>
  <div class="expgrid">
    <table class="grid etable">
      <colgroup><col class="c21"><col class="c241"><col class="c241"></colgroup>
      <thead><tr><th></th><th class="hl">工程量名称</th><th class="hl">工程量代码</th></tr></thead>
      <tbody>
        <tr><th>7</th><td>外墙内脚手架面积</td><td>WQNJSJMJ</td></tr>
        <tr><th>8</th><td>内墙脚手架面积</td><td>NQJSJMJ</td></tr>
        <tr><th>9</th><td>外墙外侧钢丝网片总长度</td><td>WQWCGSWPZCD</td></tr>
        <tr><th>10</th><td>外墙内侧钢丝网片总长度</td><td>WQNCGSWPZCD</td></tr>
        <tr><th>11</th><td>内墙两侧钢丝网片总长度</td><td>NQLCGSWPZCD</td></tr>
        <tr><th>12</th><td>外部墙梁钢丝网片长度</td><td>WQLGSWPCD</td></tr>
        <tr><th>13</th><td>外部墙柱钢丝网片长度</td><td>WQZGSWPCD</td></tr>
        <tr><th>14</th><td>外部墙墙钢丝网片长度</td><td>WQQGSWPCD</td></tr>
        <tr><th>15</th><td>内部墙梁钢丝网片长度</td><td>NQLGSWPCD</td></tr>
        <tr><th>16</th><td>内部墙柱钢丝网片长度</td><td>NQZGSWPCD</td></tr>
        <tr class="cur"><th>17</th><td>内部墙墙钢丝网片长度</td><td>NQQGSWPCD</td></tr>
        <tr><th>18</th><td>面积</td><td>MJ</td></tr>
        <tr><th>19</th><td>体积（高度3.6米以上）</td><td>TJ3.6S</td></tr>
      </tbody>
    </table>
    <i class="vbar v-exp"></i>
  </div>
  <div class="expfoot">
    <label><input type="radio" name="mode">替换</label><label><input type="radio" name="mode" checked>追加</label>
    <button class="btn primary">确定</button><button class="btn">取消</button>
  </div>
  <svg class="grip"><use href="#s-grip"/></svg>
</section>
</body>
</html>
```

FILE: styles.css
```css
* { box-sizing: border-box; }
html, body { height: 100%; }
body {
  margin: 0;
  display: flex;
  flex-direction: column;
  position: relative;
  overflow: hidden;
  background: #fff;
  color: #262626;
  font: 12px/16px "Open Sans", "Noto Sans CJK SC", sans-serif;
}
button, input, select, textarea { font: inherit; color: inherit; }
button { background: none; border: 0; padding: 0; margin: 0; display: flex; align-items: center; }
a { color: inherit; text-decoration: none; }
ul { list-style: none; margin: 0; padding: 0; }
h1, h2 { margin: 0; font-size: 12px; font-weight: 400; }
svg { display: block; flex: none; width: 18px; height: 18px; }
.sprite { position: absolute; width: 0; height: 0; }
table { border-spacing: 0; table-layout: fixed; width: 100%; }

/* icon colours */
.k { fill: none; stroke: #3b4760; }
.b { fill: none; stroke: #1a6fe0; }
.bf { fill: #1a6fe0; }
.w { fill: none; stroke: #555; }
.l { fill: #b9c3da; }
.m { fill: #8d9bbd; }
.d { fill: #55658c; }

/* check boxes and radios */
input[type=checkbox], input[type=radio] {
  appearance: none; flex: none; display: block; margin: 0;
  width: 14px; height: 14px;
  border: 1px solid #8c8c8c; border-radius: 2px; background: #fff;
}
input[type=checkbox]:disabled { background: #efefef; border-color: #a8a8a8; }
input[type=checkbox]:checked {
  border-color: #2b7de1; background: #2b7de1;
}
input[type=checkbox]:checked::after {
  content: ""; display: block; width: 4px; height: 8px; margin: 0 0 0 4px;
  border: solid #fff; border-width: 0 2px 2px 0; transform: rotate(45deg);
}
input.mixed { border-color: #888; padding: 1px; }
input.mixed::after { content: ""; display: block; width: 10px; height: 10px; background: #92c5fa; border: 1px solid #3c8ceb; }
input[type=radio] { border-radius: 50%; }
input[type=radio]:checked::after { content: ""; display: block; width: 6px; height: 6px; margin: 3px; border-radius: 50%; background: #2b7de1; }

/* shared controls */
.tool { gap: 4px; white-space: nowrap; height: 20px; }
.tool.off { color: #a6a6a6; }
.tool.off .k, .tool.off .b { stroke: #b4b4b4; }
.off .k, .off .b { stroke: #b4b4b4; }
.caret::after, .drop::after, .combo::after {
  content: ""; flex: none; border: 3px solid transparent; border-top: 4px solid #777; border-bottom: 0; margin-left: 2px;
}
.combo { display: flex; align-items: center; position: relative; }
.combo select { appearance: none; border: 0; background: none; outline: 0; width: 100%; padding: 0 4px; }
.combo::after { position: absolute; right: 5px; }
.boxed { border: 1px solid #c6c6c6; border-radius: 3px; height: 26px; background: #fff; }
.boxed select { padding: 0 2px; }
.sep { width: 1px; height: 20px; background: #d8d8d8; flex: none; }
.btn { height: 26px; border: 1px solid #c2c2c2; border-radius: 3px; background: #fff; justify-content: center; }
.btn.primary { background: #2b7de1; border-color: #2b7de1; color: #fff; }
.vbar { position: absolute; width: 4px; border-radius: 2px; background: #e4e4e4; }
.winbtns { display: flex; margin-left: auto; gap: 16px; }
.winbtns svg { width: 12px; height: 12px; }
.winbtns.wide { gap: 24px; padding-right: 12px; }
.lock { width: 12px; height: 15px; }
.blue { color: #0a50f0; }

/* title bar */
.titlebar { display: flex; align-items: center; height: 28px; padding: 0 0 2px 3px; }
.titlebar h1 { white-space: nowrap; flex: 1; padding-left: 14px; }
.logo { width: 22px; height: 20px; }
.quick { display: flex; gap: 16px; padding-left: 17px; }
.quick .drop { margin-right: -8px; }
.drop.off::after { border-top-color: #bbb; }
.more::after { content: ""; width: 8px; height: 7px; border: 4px solid transparent; border-top: 4px solid #555; border-bottom: 0; }

/* menu */
.menu { display: flex; align-items: center; height: 28px; gap: 26px; padding-left: 22px; border-bottom: 1px solid #ececec; font-size: 13px; }
.menu > a { height: 28px; line-height: 32px; white-space: nowrap; }
.menu > a.on { color: #1170e8; font-weight: 700; border-bottom: 2px solid #1170e8; margin: 0 -3px; padding: 0 3px; }
.menu-right { display: flex; align-items: center; gap: 8px; margin-left: auto; padding: 6px 4px 0 0; }
.search { display: flex; align-items: center; width: 320px; height: 20px; border: 1px solid #dcdcdc; border-radius: 2px; padding: 0 7px 0 3px; font-size: 12px; margin-right: -3px; }
.search input { flex: 1; border: 0; outline: 0; background: none; padding: 0; }
::placeholder { color: #8c8c8c; opacity: 1; }
.search svg, .pill svg { width: 12px; height: 12px; }
.avatar { width: 16px; height: 16px; }
.phone { font-size: 12px; margin-left: -8px; padding-right: 10px; }
.mi { width: 16px; height: 18px; }

/* ribbon */
.ribbon { display: flex; height: 100px; padding: 5px 0 0 8px; }
.rb-select { display: grid; grid-template-columns: 40px auto; grid-template-rows: 72px 24px; gap: 0 5px; width: 136px; }
.big { flex-direction: column; justify-content: space-between; width: 40px; height: 71px; padding: 2px 0 14px; border-radius: 3px; background: #c2daf3; }
.big svg { width: 24px; height: 30px; }
.rb-col { display: flex; flex-direction: column; gap: 4px; }
.rb-name { grid-column: 1 / 3; padding-left: 99px; line-height: 24px; }
.rb { display: flex; align-items: flex-start; align-self: flex-start; flex: none; border-right: 1px solid #d8d8d8; height: 90px; padding: 1px 10px 0 8px; }
.ribbon .tool { gap: 2px; }
.rb-select .rb-col { padding-top: 1px; }
.g-find { width: 89px; }
.g-scale { width: 203px; gap: 11px; }
.g-def { width: 276px; justify-content: space-between; }
.g-mod { width: 237px; justify-content: space-between; }
.g-pt { width: 69px; gap: 15px; }
.g-box { width: 152px; padding: 1px 26px 0 22px; justify-content: space-between; }
.g-grid { width: 78px; padding-left: 14px; }
.g-last { width: 192px; gap: 11px; }
.ic32 { width: 32px; height: 32px; }

.floorbar { display: flex; align-items: center; height: 32px; background: #f0f0f0; border-top: 1px solid #d8d8d8; }
.floor { width: 99px; height: 31px; border-right: 1px solid #d0d0d0; }
.floor select { padding-left: 2px; }
.floor-type { padding-left: 4px; }

/* main work area */
.work { flex: 1; min-height: 0; display: flex; gap: 4px; background: #f4f4f6; border-top: 1px solid #d8d8d8; }
.panel { background: #fff; border: 1px solid #d6d6da; border-top: 0; overflow: hidden; display: flex; flex-direction: column; }
.phead { display: flex; align-items: center; flex: none; height: 29px; background: #efeff2; padding: 0 8px 0 6px; gap: 12px; }
.dots { width: 7px; height: 16px; padding-top: 1px; }
.px { margin-left: auto; }
.px svg { width: 10px; height: 10px; opacity: .6; }
.navpanel { width: 130px; flex: none; }
.navscroll { flex: 1; min-height: 0; position: relative; overflow: hidden; }
.v-nav { right: 4px; top: 11px; height: 452px; }
.bignav { width: 117px; background: #f5f7f9; }
.bignav li { display: flex; align-items: center; gap: 14px; height: 42px; padding-left: 11px; position: relative; }
.bignav li > svg:first-child { width: 24px; height: 24px; }
.bignav li.on { background: #e9eaef; color: #2f6fe8; }
.bignav li.sub { height: 28px; padding-left: 21px; background: #fff; }
.bignav li.sub.on { color: #1a78f0; }
.bignav .lock { position: absolute; left: 94px; top: 14px; }
.bignav .lock.far { left: 105px; }
.badge { position: absolute; right: 0; top: 4px; width: 51px; height: 19px; line-height: 19px; padding-left: 4px; white-space: nowrap; overflow: hidden; border-radius: 8px 0 0 8px; background: linear-gradient(90deg, #f8dca2, #eebb62); color: #5f3d10; }
.hot::after { content: ""; position: absolute; left: 35px; top: 5px; width: 6px; height: 6px; border-radius: 50%; background: #f00; }

.sidecol { width: 280px; flex: none; display: flex; flex-direction: column; gap: 5px; }
.sidelist { flex: none; height: 380px; }
.sideprops { flex: 1; min-height: 0; border-top: 1px solid #d6d6da; }
.tabbed { background: #fff; padding-left: 6px; position: relative; box-shadow: inset 23px 0 0 #ededf0; height: 28px; }
.tabbed .tab { color: #1a78f0; padding-left: 8px; }
.iconbtns { display: flex; gap: 5px; padding: 7px 0 7px 10px; }
.iconbtns button { width: 32px; height: 26px; justify-content: center; background: #f4f4f4; border-radius: 3px; }
.iconbtns .split { width: 45px; justify-content: flex-start; padding-left: 7px; gap: 11px; background: linear-gradient(90deg, #f4f4f4 32px, #fff 32px, #fff 33px, #f4f4f4 33px); }
.split::after { content: ""; border: 3px solid transparent; border-top: 4px solid #888; border-bottom: 0; }
.pill { display: flex; align-items: center; flex: none; height: 26px; border-radius: 13px; background: #f4f4f4; margin: 0 10px 0 8px; padding: 0 11px; }
.pill input { flex: 1; min-width: 0; border: 0; background: none; outline: 0; padding: 0; }
.tree { padding: 12px 0 0 21px; }
.tree li { line-height: 20px; height: 21px; width: 158px; padding-left: 3px; margin-bottom: 3px; border-radius: 3px; white-space: nowrap; }
.tree .sel { background: #c0d8f1; }
.tree .root { padding: 0; margin-left: -6px; position: relative; }
.tree .root::before { content: ""; position: absolute; left: -8px; top: 9px; border: 3px solid transparent; border-top: 4px solid #888; border-bottom: 0; }
.sp-head { height: 24px; line-height: 24px; background: #efefef; border-top: 1px solid #ddd; border-bottom: 1px solid #d6d6d6; padding-left: 26px; margin-top: 1px; flex: none; }
.sp-group { height: 25px; line-height: 25px; background: #ededed; padding-left: 21px; position: relative; flex: none; }
.sp-group::before { content: ""; position: absolute; left: 9px; top: 10px; border: 3px solid transparent; border-top: 4px solid #888; border-bottom: 0; }
.sp-rows label { display: grid; grid-template-columns: 86px 123px 43px; align-items: center; height: 25px; padding-left: 14px; white-space: nowrap; }
.sp-rows input { width: 123px; height: 21px; border: 1px solid #d9d9d9; padding: 0 2px; color: #262626; }
.dot { width: 8px; height: 8px; border-radius: 50%; background: #dcdcdc; border: 1px solid #b4b4b4; justify-self: center; }
.blue-dot { background: #1a6fe0; border-color: #1a6fe0; }

.canvas { flex: 1; min-width: 0; background: #000; display: flex; align-items: flex-end; padding: 0 0 35px 42px; }
.canvas svg { width: 80px; height: 14px; }

.viewpanel { width: 280px; flex: none; }
.vtabs { display: flex; gap: 1px; height: 27px; padding: 5px 0 0 3px; border-bottom: 1px solid #c9c9c9; flex: none; }
.vtabs button { height: 21px; padding: 0 7px; background: #dcdcdc; color: #555; border-radius: 3px 3px 0 0; }
.vwrap { flex: 1; min-height: 0; overflow: hidden; position: relative; margin: 2px 3px 0; border: 1px solid #d0d0d0; }
.v-view { right: 4px; top: 12px; height: 172px; }
.vtable { width: 259px; }
.vtable th, .vtable td { height: 21px; padding: 0; border: solid #d9d9d9; border-width: 0 1px 1px 0; font-weight: 400; line-height: 20px; text-align: center; }
.vtable input { margin: 0 auto; }
.vtable .end { text-align: right; padding-right: 10px; }
.vtable .start label { display: flex; padding-left: 10px; }
.vtable .start input { margin: 3px 6px 0 0; }
.c62 { width: 62px; } .c63 { width: 63px; }
.vfoot { display: flex; justify-content: flex-end; padding: 7px 8px; height: 39px; flex: none; }
.vfoot .btn { width: 90px; }

/* status bar */
.status { display: flex; align-items: center; height: 31px; background: #fbfbfb; flex: none; padding: 0 10px 0 2px; white-space: nowrap; }
.status b { font-weight: 400; padding-left: 4px; }
.s1 { width: 90px; } .s2 { width: 139px; } .s3 { width: 111px; } .s4 { width: 110px; }
.sbtns { display: flex; gap: 4px; }
.sbtns button { width: 25px; height: 25px; border: 1px solid #a8a8a8; border-radius: 3px; justify-content: center; background: #fff; }
.sbtns .wide { width: 36px; gap: 2px; }
.sbtns .wide::after { content: ""; border: 3px solid transparent; border-top: 4px solid #555; border-bottom: 0; }
.sbtns .on { background: #d3e6fc; border-color: #4690ea; }
.hint { display: flex; align-items: center; gap: 4px; padding-left: 15px; }
.hint svg { width: 15px; height: 16px; }
.right { display: flex; margin-left: auto; }
.right .hint { gap: 5px; padding-left: 13px; }
.taskbar { display: flex; height: 8px; flex: none; overflow: hidden; background: linear-gradient(90deg, #212226, #26282c 45%, #1c2330 60%, #242220); padding-left: 48px; }
.task-app { width: 288px; background: linear-gradient(120deg, #f0f0f0 78%, #d2566a 79%, #d2566a 80%, #f0f0f0 81%, #3a7cc8 82%, #3a7cc8 83%, #f0f0f0 84%); }
.task-on { width: 48px; margin-left: 248px; background: #4b4c50; }
.clock { margin-left: auto; padding-right: 74px; color: #fff; line-height: 22px; }

/* windows */
.win { position: absolute; background: #fcfcfd; border: 1px solid #b4b5b9; box-shadow: 0 4px 18px rgba(0, 0, 0, .35); display: flex; flex-direction: column; }
.defwin { left: 176px; right: 176px; top: 77px; bottom: 86px; }
.wintitle { display: flex; align-items: center; flex: none; height: 29px; padding: 8px 11px 0 10px; font-size: 14px; border-bottom: 1px solid #c4c5cb; }
.toolbar { display: flex; align-items: center; background: #fff; border-bottom: 2px solid #c4c5cb; flex: none; }
.dtools { height: 30px; gap: 8px; padding: 0 0 0 1px; }
.dtools .tool { padding-top: 2px; }
.dtools .fl { width: 100px; margin-right: -6px; }
.caret { margin-right: -4px; }
.defbody { flex: 1; min-height: 0; display: flex; gap: 4px; background: #efeff1; }
.strip { height: 9px; background: #d2d3da; border-bottom: 1px solid #c4c5cb; flex: none; }
.defbody h2 { height: 23px; line-height: 22px; flex: none; background: #eee; color: #808080; font-weight: 500; padding-left: 7px; border-bottom: 2px solid #c8c9ce; }
.dnav { width: 199px; flex: none; background: #fff; border-right: 1px solid #c8c9ce; }
.smallnav { padding-top: 1px; }
.smallnav li { display: flex; align-items: center; height: 24px; padding-left: 3px; gap: 6px; }
.smallnav li > svg:first-child { width: 16px; height: 16px; }
.smallnav .lock { margin-left: 10px; }
.smallnav .sub { padding-left: 25px; }
.smallnav .sel { background: #c6dff9; }
.dmid { width: 467px; flex: none; display: flex; flex-direction: column; gap: 4px; margin-right: 1px; }
.dlist { flex: 1; min-height: 0; background: #fff; border: solid #c8c9ce; border-width: 0 1px 1px; }
.dprops { height: 370px; flex: none; background: #fff; border: solid #c8c9ce; border-width: 1px 1px 0; display: flex; flex-direction: column; }
.tscroll { position: relative; flex: 1; min-height: 0; overflow: hidden; padding-right: 14px; }
.v-prop { right: 4px; top: 22px; height: 203px; }

/* data grids */
.grid th, .grid td { height: 21px; padding: 0 3px; border: solid #d2d2d2; border-width: 0 1px 1px 0; font-weight: 400; line-height: 16px; overflow: hidden; white-space: nowrap; text-align: left; }
.grid th { background: #efefef; text-align: center; padding: 0; border-color: #c4c4c4; }
.grid th.hl, .grid .cur th { background: #80baf9; border-color: #65a6ee; color: #fff; font-weight: 700; }
.grid td.c { text-align: center; }
.grid td.blue { color: #0a50f0; }
.c20 { width: 20px; } .c21 { width: 21px; } .c22 { width: 22px; } .c41 { width: 41px; } .c46 { width: 46px; }
.c100 { width: 100px; } .c101 { width: 101px; } .c102 { width: 102px; } .c111 { width: 111px; } .c150 { width: 151px; } .c201 { width: 201px; } .c241 { width: 241px; }
.ptable thead th { height: 22px; }
.ptable input { margin: 0 auto; }
.ptable td.nm { padding-left: 31px; background: linear-gradient(#d2d2d2, #d2d2d2) 9px 9px / 16px 1px no-repeat; }
.ptable td.grp { padding-left: 2px; }
.minus { display: inline-block; width: 13px; height: 13px; border: 1px solid #888; border-radius: 2px; line-height: 10px; text-align: center; margin-right: 6px; }
.ptable td.mute { color: #909090; }
.rebar { display: inline-block; width: 11px; height: 11px; vertical-align: 1px; }

.dright { flex: 1; min-width: 0; display: flex; flex-direction: column; border-left: 1px solid #c8c9ce; background: #fff; }
.rtools { height: 28px; gap: 12px; padding-left: 4px; }
.rtools .tool { padding-top: 1px; }
.over { margin-left: auto; margin-right: 2px; width: 11px; height: 20px; background: #efefef; border-radius: 4px; justify-content: center; }
.over svg { width: 8px; height: 6px; }
.upper { flex: 1; min-height: 0; position: relative; overflow: hidden; border-bottom: 1px solid #bfbfc4; }
.hbar { position: absolute; left: 21px; right: 230px; bottom: 4px; height: 4px; border-radius: 2px; background: #e8e8e8; }
.mtable tbody th, .mtable tbody td { height: 39px; }
.mtable tbody td { background: #e4f2fe; padding: 0 2px; }
.mtable .tall td, .mtable .tall th { height: 141px; }
.mtable td.lines { line-height: 17px; padding: 2px 1px; vertical-align: top; }
.mtable tbody td.editing { background: #fff; border: 1px solid #5b9fe8; padding: 0; }
.lower { flex: none; border-top: 5px solid #efefef; display: flex; flex-direction: column; }
.ltabs { height: 28px; border-bottom: 2px solid #c4c5cb; padding: 4px 0 0 392px; }
.ltabs button { height: 21px; padding: 0 6px; gap: 7px; background: #dcdcdc; color: #555; border-radius: 3px 3px 0 0; }
.ltabs svg { width: 7px; height: 7px; }
.lbody { display: flex; height: 360px; border-bottom: 2px solid #c4c5cb; }
.ltree { width: 221px; flex: none; position: relative; overflow: hidden; border-right: 1px solid #c8c9ce; padding: 7px 0 0 23px; }
.ltree li { height: 24px; line-height: 24px; position: relative; white-space: nowrap; }
.ltree li::before { content: ""; position: absolute; left: -7px; top: 8px; border: 4px solid transparent; border-left-color: #888; border-right: 0; }
.v-tree { right: 4px; top: 20px; height: 253px; }
.lgrid { flex: 1; min-width: 0; position: relative; margin-left: 5px; padding-right: 14px; border-left: 1px solid #c8c9ce; }
.qtable td { padding: 0 2px; }
.qtable td:not(:nth-child(3)) { font: 10px/16px "Liberation Mono", "Noto Sans CJK SC", monospace; }
.qtable td.han:not(:nth-child(3)) { font-size: 12px; }
.qtable .focus { box-shadow: inset 0 0 0 2px #808080; }
.v-q { right: 5px; top: 185px; height: 162px; }
.lbar { display: flex; align-items: center; height: 30px; padding-left: 5px; border-bottom: 2px solid #c4c5cb; gap: 3px; }
.lib { width: 256px; } .spec { width: 119px; }
.lbar a { padding-left: 5px; }
.lfoot { height: 11px; background: linear-gradient(90deg, #e3e3e3 85%, #fcfcfd 90%); display: flex; justify-content: flex-end; padding: 0 3px; }
.grip { width: 9px; height: 9px; }

/* expression window */
.expwin { left: 661px; top: 279px; width: 582px; height: 465px; padding: 0 9px; }
.exptitle { display: flex; align-items: center; height: 37px; padding: 1px 3px 0 2px; font-size: 14px; }
.expwin textarea { display: block; height: 60px; resize: none; border: 1px solid #c2c2c2; border-radius: 0; padding: 5px 4px; outline: 0; color: #000; background: #fff; }
.explabel { display: flex; justify-content: space-between; align-items: center; height: 29px; padding-right: 16px; }
.explabel label, .expfoot label { display: flex; align-items: center; gap: 4px; }
.expgrid { height: 296px; border: 1px solid #c2c2c2; overflow: hidden; position: relative; background: #fff; }
.etable { width: 503px; }
.etable tbody th, .etable tbody td { height: 22px; }
.etable tbody td { background: #e4f2fe; }
.etable .cur td { background: #e9f4fe; box-shadow: inset 0 2px #808080, inset 0 -2px #808080; border-bottom: 0; }
.etable .cur td:last-child { background: #d5e8fc; box-shadow: inset 0 2px #808080, inset -2px -2px #808080; border-right: 0; }
.v-exp { right: 4px; top: 57px; height: 90px; }
.expfoot { display: flex; align-items: center; height: 38px; gap: 12px; padding-left: 1px; }
.expfoot .btn { width: 78px; }
.expfoot .primary { margin-left: auto; margin-right: -6px; }
.expwin > .grip { position: absolute; right: 3px; bottom: 3px; }
```
